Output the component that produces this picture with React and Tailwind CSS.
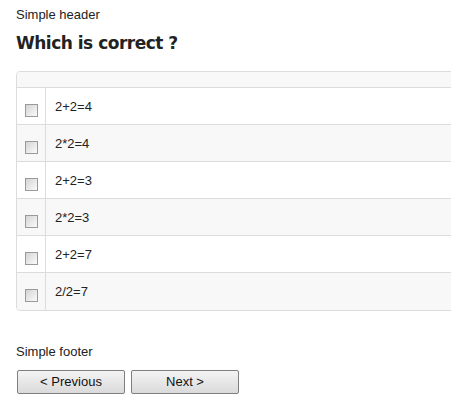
const options = ['2+2=4', '2*2=4', '2+2=3', '2*2=3', '2+2=7', '2/2=7']

function Box() {
  return (
    <span className="block w-[13px] h-[13px] border border-[#9a9a9a] bg-gradient-to-br from-[#d4d4d4] to-[#fbfbfb]" />
  )
}

export default function App() {
  return (
    <div className="w-[451px] h-[418px] overflow-hidden bg-white text-[#222] font-['Liberation_Sans',Arial,sans-serif]">
      <div className="pl-4 pt-[7px]">
        <p className="text-[13px] leading-[16px]">Simple header</p>
        <h1 className="mt-[10px] text-[17px] leading-[20px] font-bold tracking-[-0.5px] text-[#222] font-['DejaVu_Sans',Verdana,sans-serif]">
          Which is correct ?
        </h1>

        <div className="mt-[18px] w-[480px] border border-[#dcdcdc] rounded-l-[4px] overflow-hidden">
          <div className="h-4 bg-[#f8f8f8] border-b border-[#dcdcdc]" />
          {options.map((o, i) => (
            <div
              key={o}
              className={`flex h-[37px] ${i < options.length - 1 ? 'border-b border-[#dcdcdc]' : 'h-[36px]'} ${i % 2 ? 'bg-[#f8f8f8]' : 'bg-white'}`}
            >
              <div className="w-[29px] border-r border-[#dcdcdc] flex items-center justify-center pt-[8px] pl-[1px]">
                <Box />
              </div>
              <div className="pl-[9px] pt-[11px] text-[13px] leading-[16px]">{o}</div>
            </div>
          ))}
        </div>

        <p className="mt-[33px] text-[13px] leading-[16px]">Simple footer</p>
        <div className="mt-[10px] flex gap-[6px] pl-[1px]">
          <button className="w-[108px] h-[24px] text-[13px] border border-[#7f7f7f] rounded-[2px] bg-gradient-to-b from-[#f4f4f4] to-[#dadada] text-[#111]">
            &lt; Previous
          </button>
          <button className="w-[108px] h-[24px] text-[13px] border border-[#7f7f7f] rounded-[2px] bg-gradient-to-b from-[#f4f4f4] to-[#dadada] text-[#111]">
            Next &gt;
          </button>
        </div>
      </div>
    </div>
  )
}
